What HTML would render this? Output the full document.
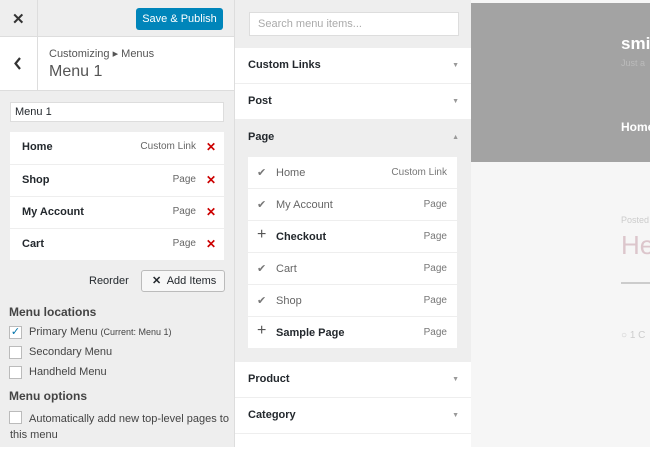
<!DOCTYPE html>
<html><head><meta charset="utf-8"><style>
*{margin:0;padding:0;box-sizing:border-box}
body{width:654px;height:450px;overflow:hidden;background:#fff;font-family:"Liberation Sans",sans-serif;position:relative;color:#23282d}
.a{position:absolute}
.left{left:0;top:0;width:235px;height:447px;background:#eee;border-right:1px solid #ddd}
.mid{left:235px;top:0;width:236px;height:447px;background:#eee}
.row{position:absolute;left:0;width:214px;height:31px;background:#fff;font-size:11px}
.row b{position:absolute;left:12px;top:9px;font-weight:bold}
.row i{position:absolute;right:28px;top:9px;font-style:normal;color:#666;font-size:10px}
.row u{position:absolute;right:8px;top:8px;text-decoration:none;color:#c00;font-size:12px;font-weight:bold}
.sec{position:absolute;left:0;width:236px;height:35px;background:#fff;font-size:11px;font-weight:bold}
.sec span{position:absolute;left:13px;top:11px}
.sec em{position:absolute;right:12px;top:14px;font-style:normal;color:#999;font-size:7px}
.it{position:absolute;left:13px;width:209px;height:31px;background:#fff;font-size:11px}
.it .ic{position:absolute;left:9px;top:9px;color:#777;font-size:11px}
.it b{position:absolute;left:28px;top:10px}
.it i{position:absolute;right:10px;top:10px;font-style:normal;color:#777;font-size:10px}
.cb{position:absolute;left:9px;width:13px;height:13px;border:1px solid #bbb;background:#fff}
.lbl{position:absolute;left:29px;font-size:11px;color:#444}
</style></head><body>
<div class="a left">
 <div class="a" style="left:0;top:0;width:234px;height:37px;background:#eee;border-bottom:1px solid #ddd"></div>
 <div class="a" style="left:12px;top:10px;font-size:15px;font-weight:bold;color:#333">✕</div>
 <div class="a" style="left:37px;top:0;width:1px;height:37px;background:#ddd"></div>
 <div class="a" style="left:136px;top:8px;width:87px;height:22px;background:#0085ba;border-radius:3px;color:#fff;font-size:11px;text-align:center;line-height:22px">Save &amp; Publish</div>
 <div class="a" style="left:0;top:37px;width:234px;height:54px;background:#fff;border-bottom:1px solid #ddd"></div>
 <div class="a" style="left:37px;top:37px;width:1px;height:54px;background:#ddd"></div>
 <svg class="a" style="left:14px;top:57px" width="8" height="13"><path d="M6 1L1.5 6.5L6 12" stroke="#333" stroke-width="2.2" fill="none"/></svg>
 <div class="a" style="left:49px;top:47px;font-size:11px;color:#555">Customizing ▸ Menus</div>
 <div class="a" style="left:49px;top:63px;font-size:16px;color:#555">Menu 1</div>
 <div class="a" style="left:10px;top:102px;width:214px;height:20px;background:#fff;border:1px solid #ddd;font-size:11px;padding:3px 4px">Menu 1</div>
 <div class="a" style="left:10px;top:132px;width:214px;height:128px;background:#fff">
  <div class="row" style="top:0"><b>Home</b><i>Custom Link</i><u>✕</u></div>
  <div class="row" style="top:32px;border-top:1px solid #eee"><b>Shop</b><i>Page</i><u>✕</u></div>
  <div class="row" style="top:64px;border-top:1px solid #eee"><b>My Account</b><i>Page</i><u>✕</u></div>
  <div class="row" style="top:96px;border-top:1px solid #eee"><b>Cart</b><i>Page</i><u>✕</u></div>
 </div>
 <div class="a" style="left:89px;top:275px;font-size:11px">Reorder</div>
 <div class="a" style="left:141px;top:270px;width:84px;height:22px;border:1px solid #bbb;background:#f7f7f7;border-radius:3px;font-size:11px;line-height:20px;padding-left:10px"><b>✕</b>&nbsp; Add Items</div>
 <div class="a" style="left:9px;top:305px;font-size:12px;font-weight:bold;color:#444">Menu locations</div>
 <div class="cb" style="top:326px;color:#0073aa;font-size:11px;line-height:11px;text-align:center">✓</div>
 <div class="lbl" style="top:326px">Primary Menu <span style="font-size:9px">(Current: Menu 1)</span></div>
 <div class="cb" style="top:346px"></div><div class="lbl" style="top:346px">Secondary Menu</div>
 <div class="cb" style="top:366px"></div><div class="lbl" style="top:366px">Handheld Menu</div>
 <div class="a" style="left:9px;top:389px;font-size:12px;font-weight:bold;color:#444">Menu options</div>
 <div class="cb" style="top:411px"></div>
 <div class="a" style="left:10px;top:411px;font-size:11px;color:#444;line-height:16px;text-indent:19px;width:220px">Automatically add new top-level pages to this menu</div>
</div>
<div class="a mid">
 <div class="a" style="left:14px;top:12px;width:210px;height:24px;background:#fff;border:1px solid #ddd;font-size:11px;color:#aaa;padding:5px 8px">Search menu items...</div>
 <div class="sec" style="top:48px"><span>Custom Links</span><em>▼</em></div>
 <div class="sec" style="top:84px"><span>Post</span><em>▼</em></div>
 <div class="sec" style="top:120px;background:#eee"><span>Page</span><em>▲</em></div>
 <div class="it" style="top:157px"><span class="ic">✔</span><b style="font-weight:normal;color:#666">Home</b><i>Custom Link</i></div>
 <div class="it" style="top:189px"><span class="ic">✔</span><b style="font-weight:normal;color:#666">My Account</b><i>Page</i></div>
 <div class="it" style="top:221px"><span class="ic" style="font-size:16px;top:5px;color:#555">+</span><b>Checkout</b><i>Page</i></div>
 <div class="it" style="top:253px"><span class="ic">✔</span><b style="font-weight:normal;color:#666">Cart</b><i>Page</i></div>
 <div class="it" style="top:285px"><span class="ic">✔</span><b style="font-weight:normal;color:#666">Shop</b><i>Page</i></div>
 <div class="it" style="top:317px"><span class="ic" style="font-size:16px;top:5px;color:#555">+</span><b>Sample Page</b><i>Page</i></div>
 <div class="sec" style="top:362px"><span>Product</span><em>▼</em></div>
 <div class="sec" style="top:398px"><span>Category</span><em>▼</em></div>
 <div class="sec" style="top:434px"></div>
</div>
<div class="a" style="left:471px;top:0;width:179px;height:447px;background:#f6f6f6;overflow:hidden">
 <div class="a" style="left:0;top:3px;width:179px;height:159px;background:#a3a3a3"></div>
 <div class="a" style="left:150px;top:34px;color:#fff;font-size:17px;font-weight:bold">smi</div>
 <div class="a" style="left:150px;top:58px;color:#bbb;font-size:9px">Just a</div>
 <div class="a" style="left:150px;top:120px;color:#fff;font-size:12px;font-weight:bold">Home</div>
 <div class="a" style="left:150px;top:215px;color:#ccc;font-size:9px">Posted</div>
 <div class="a" style="left:150px;top:230px;color:#dcc6cc;font-size:26px">He</div>
 <div class="a" style="left:150px;top:282px;width:30px;height:2px;background:#ccc"></div>
 <div class="a" style="left:150px;top:330px;color:#ccc;font-size:10px">○ 1 C</div>
</div>
</body></html>
